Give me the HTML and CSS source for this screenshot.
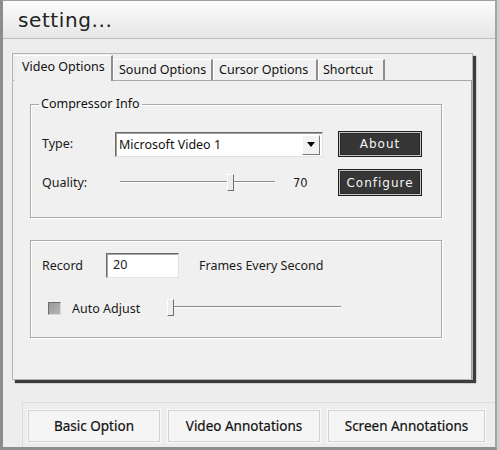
FILE: index.html
```html
<!DOCTYPE html>
<html>
<head>
<meta charset="utf-8">
<link rel="stylesheet" href="styles.css">
</head>
<body>
<div class="window">
  <div class="titlebar"><span class="title">setting...</span></div>
  <div class="content">
    <div class="tabframe">
      <div class="tabs">
        <div class="tab active">Video Options</div>
        <div class="tab w-sound">Sound Options</div>
        <div class="tab w-cursor">Cursor Options</div>
        <div class="tab w-short">Shortcut</div>
      </div>
      <div class="page">
        <fieldset class="group g1">
          <legend>Compressor Info</legend>
          <div class="row r1">
            <span class="lbl">Type:</span>
            <div class="select"><span class="seltext">Microsoft Video 1</span><span class="arrow"><span class="tri"></span></span></div>
            <button class="dark">About</button>
          </div>
          <div class="row r2">
            <span class="lbl">Quality:</span>
            <div class="slider q"><div class="track"></div><div class="thumb"></div></div>
            <span class="val">70</span>
            <button class="dark">Configure</button>
          </div>
        </fieldset>
        <div class="group g2">
          <div class="row r3">
            <span class="lbl2">Record</span>
            <div class="input">20</div>
            <span class="fps">Frames Every Second</span>
          </div>
          <div class="row r4">
            <span class="check"></span>
            <span class="chklbl">Auto Adjust</span>
            <div class="slider a"><div class="track"></div><div class="thumb"></div></div>
          </div>
        </div>
      </div>
    </div>
    <div class="btnbar">
      <button class="bb b1">Basic Option</button>
      <button class="bb b2">Video Annotations</button>
      <button class="bb b3">Screen Annotations</button>
    </div>
  </div>
</div>
</body>
</html>
```
FILE: styles.css
```css
html, body {
  margin: 0;
  padding: 0;
}
body {
  background: #cfcfcf;
  width: 500px;
  height: 450px;
  overflow: hidden;
  font-family: "Noto Sans", "Open Sans", sans-serif;
  font-size: 12px;
  color: #1a1a1a;
}
.window {
  box-sizing: border-box;
  width: 497px;
  height: 450px;
  border-left: 3px solid #8c8c8c;
  border-right: 2px solid #a4a4a4;
  border-top: 1px solid #a0a0a0;
  border-bottom: 3px solid #8c8c8c;
  background: #eeeeee;
  display: flex;
  flex-direction: column;
}
.titlebar {
  height: 37px;
  flex: none;
  background: linear-gradient(#fbfbfb, #e6e6e6);
  border-bottom: 1px solid #bdbdbd;
  display: flex;
  align-items: center;
}
.title {
  font-family: "DejaVu Sans", Verdana, sans-serif;
  font-size: 20px;
  letter-spacing: 0.6px;
  color: #222;
  margin-left: 15px;
  margin-top: 1px;
}
.content {
  flex: 1;
  display: flex;
  flex-direction: column;
  background: #ededed;
}
.tabframe {
  box-sizing: border-box;
  width: 461px;
  height: 327px;
  margin: 14px 0 0 9px;
  border: 1px solid #b4b4b4;
  background: #f0f0f0;
  box-shadow: 3px 3px 1px #3c3c3c;
  display: flex;
  flex-direction: column;
}
.tabs {
  height: 26px;
  display: flex;
  align-items: flex-end;
  padding-left: 1px;
  flex: none;
}
.tab {
  box-sizing: border-box;
  height: 21px;
  line-height: 19px;
  padding-left: 5px;
  border-left: 1px solid #fff;
  border-right: 2px solid #8e8e8e;
  border-top: 1px solid #fff;
  background: #f0f0f0;
  font-size: 12.5px;
  color: #111;
  white-space: nowrap;
}
.tab.active {
  width: 99px;
  height: 26px;
  margin-bottom: -1px;
  line-height: 22px;
  padding-left: 7px;
  position: relative;
  border-left: 1px solid #e6e6e6;
  border-right: 2px solid #8e8e8e;
}
.w-sound { width: 100px; }
.w-cursor { width: 105px; }
.w-short { width: 67px; padding-left: 4px; }
.page {
  flex: 1;
  border-top: 1px solid #a8a8a8;
  border-right: 1px solid #9e9e9e;
  background: #f0f0f0;
  padding-top: 15px;
}
.group {
  box-sizing: border-box;
  width: 412px;
  margin: 0 0 0 17px;
  border: 1px solid #a8a8a8;
  box-shadow: inset 1px 1px #fff, 1px 1px #fff;
}
.g1 {
  padding: 0 0 0 11px;
  height: 122px;
}
.g1 legend {
  margin-left: -3px;
  padding: 0 2px;
  font-size: 12.5px;
  line-height: 16px;
  color: #111;
}
.row {
  display: flex;
  align-items: center;
}
.r1 {
  height: 27px;
  margin-top: 18px;
}
.r2 {
  height: 27px;
  margin-top: 12px;
}
.lbl {
  width: 73px;
  flex: none;
  font-size: 12.5px;
}
.select {
  box-sizing: border-box;
  width: 208px;
  height: 25px;
  margin-top: 2px;
  background: #fff;
  border: 1px solid;
  border-color: #6a6a6a #e2e2e2 #e2e2e2 #6a6a6a;
  box-shadow: inset 1px 1px #a0a0a0;
  display: flex;
  align-items: center;
  justify-content: space-between;
  padding-left: 3px;
  padding-right: 2px;
}
.seltext {
  font-size: 12.5px;
  color: #111;
}
.arrow {
  box-sizing: border-box;
  width: 18px;
  height: 20px;
  background: #f2f2f2;
  border: 1px solid;
  border-color: #fff #7a7a7a #7a7a7a #fff;
  display: flex;
  align-items: center;
  justify-content: center;
}
.tri {
  width: 0;
  height: 0;
  border-left: 4px solid transparent;
  border-right: 4px solid transparent;
  border-top: 5px solid #000;
}
button.dark {
  box-sizing: border-box;
  width: 84px;
  height: 26px;
  margin-left: 15px;
  background: #363636;
  color: #f4f4f4;
  border: 1px solid #1c1c1c;
  box-shadow: inset 0 0 0 1px #c8c8c8, inset 0 0 0 2px #2a2a2a;
  font-family: "DejaVu Sans", Verdana, sans-serif;
  font-size: 12px;
  letter-spacing: 1px;
  padding: 0;
}
.r2 button.dark {
  height: 27px;
  margin-left: 0;
}
.slider {
  position: relative;
  height: 20px;
  flex: none;
}
.slider.q {
  width: 165px;
}
.slider .track {
  position: absolute;
  top: 8px;
  height: 1px;
  background: #8a8a8a;
  border-bottom: 1px solid #fff;
}
.slider.q .track {
  left: 5px;
  right: 5px;
}
.slider .thumb {
  position: absolute;
  top: 1px;
  width: 5px;
  height: 15px;
  background: #ececec;
  border: 1px solid;
  border-color: #fff #6f6f6f #6f6f6f #fff;
}
.slider.q .thumb {
  left: 112px;
}
.val {
  width: 45px;
  margin-left: 13px;
  font-family: "DejaVu Sans", Verdana, sans-serif;
  font-size: 11.5px;
}
.g2 {
  height: 98px;
  margin-top: 22px;
  padding: 12px 0 0 11px;
}
.r3 {
  height: 25px;
}
.lbl2 {
  width: 64px;
  flex: none;
  font-size: 12.5px;
}
.input {
  box-sizing: border-box;
  width: 73px;
  height: 25px;
  background: #fff;
  border: 1px solid;
  border-color: #6a6a6a #e2e2e2 #e2e2e2 #6a6a6a;
  box-shadow: inset 1px 1px #a8a8a8;
  padding-left: 6px;
  line-height: 21px;
  font-size: 12.5px;
}
.fps {
  margin-left: 20px;
  font-size: 12.5px;
}
.r4 {
  height: 20px;
  margin-top: 20px;
}
.check {
  box-sizing: border-box;
  width: 13px;
  height: 13px;
  margin-left: 6px;
  background: linear-gradient(135deg, #9a9a9a, #b4b4b4);
  border: 1px solid;
  border-color: #6e6e6e #d8d8d8 #d8d8d8 #6e6e6e;
  flex: none;
}
.chklbl {
  margin-left: 11px;
  width: 95px;
  flex: none;
  font-size: 12.5px;
}
.slider.a {
  width: 174px;
}
.slider.a .track {
  left: 5px;
  right: 0;
}
.slider.a .thumb {
  left: 0;
}
.btnbar {
  margin: 22px 0 0 19px;
  border-top: 1px solid #dcdcdc;
  border-left: 1px solid #dcdcdc;
  padding: 7px 0 0 5px;
  display: flex;
  gap: 8px;
  flex: 1;
}
.bb {
  box-sizing: border-box;
  height: 32px;
  background: #f5f5f5;
  border: 1px solid #d2d2d2;
  box-shadow: 0 0 0 1px #fafafa;
  font-family: "Noto Sans", "Open Sans", sans-serif;
  font-size: 13.5px;
  color: #111;
  padding: 0;
  -webkit-text-stroke: 0.2px #111;
}
.b1 { width: 132px; }
.b2 { width: 152px; }
.b3 { width: 157px; }
```
